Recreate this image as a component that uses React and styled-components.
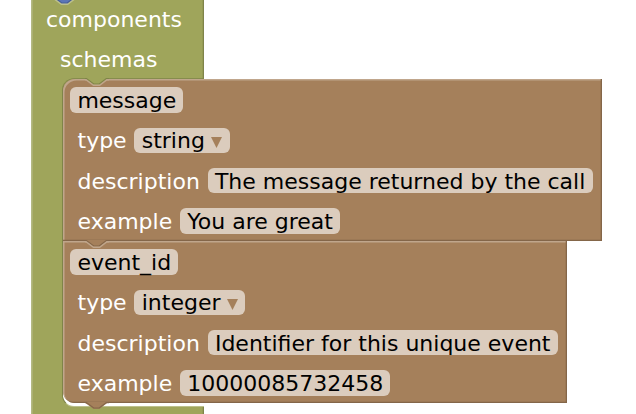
import React from "react";
import styled, { createGlobalStyle } from "styled-components";

const GREEN = "#9fa55b";
const BROWN = "#a5805b";

const GlobalStyle = createGlobalStyle`
  html, body { margin: 0; background: #fff; }
  * { box-sizing: border-box; }
`;

const Workspace = styled.main`
  width: 636px;
  height: 414px;
  overflow: hidden;
  background: #fff;
  padding-left: 31px;
  font: 22px/26px "DejaVu Sans", sans-serif;
`;

const ContainerBlock = styled.section`
  position: relative;
  width: 173px;
  height: 414px;
  color: #fff;
  background: ${GREEN};
  box-shadow: inset 1.6px 0 0 #b4b984;
`;

const Header = styled.div`
  height: 79px;
  box-shadow: inset -1.3px 0 0 #7f8449;
`;

const Label = styled.span`
  white-space: pre;
`;

const HeaderRow = styled.div`
  height: 40px;
  display: flex;
  align-items: center;
  padding-left: ${(p) => p.$indent}px;
`;

const StatementSlot = styled.div`
  margin-left: 31px;
  height: 328px;
  width: 142px;
  background: linear-gradient(${GREEN} 50%, #fff 50%);
  border-left: 1px solid #7f8449;
  border-bottom: 1px solid #bcc08c;
  border-radius: 12px 0 0 12px;
  box-shadow: 0 -0.8px 0 #7f8449;
`;

const Footer = styled.div`
  height: 7px;
  box-shadow: inset -1.3px 0 0 #7f8449;
`;

const PropertyBlock = styled.section`
  position: relative;
  width: ${(p) => p.$width}px;
  height: ${(p) => p.$height}px;
  padding-top: 1px;
  background: ${BROWN};
  border-radius: ${(p) => p.$radius};
  box-shadow:
    inset -1.3px -1.3px 0 #846649,
    inset 1.5px 1.5px 0 #c0a68c;
`;

const PropertyRow = styled.div`
  height: 40.45px;
  display: flex;
  align-items: center;
  gap: 7.7px;
  padding-left: ${(p) => (p.$titled ? 7 : 14.5)}px;

  > ${Label} {
    padding-top: 1.4px;
  }
`;

const Field = styled.span`
  height: 25.5px;
  margin-bottom: 0.8px;
  padding: 2px 7.2px 0 7.4px;
  display: flex;
  align-items: center;
  gap: 6.5px;
  border-radius: 6px;
  background: #dbccbd;
  color: #000;
  white-space: pre;
`;

const Arrow = styled.svg`
  width: 11px;
  height: 11px;
  margin-top: 2px;
`;

const Connector = styled.svg`
  position: absolute;
  left: ${(p) => p.$left}px;
  top: ${(p) => p.$top}px;
  width: 26px;
  height: 9px;
  z-index: 1;
`;

function Notch({ left, top, fill, light, dark, outgoing = false }) {
  return (
    <Connector $left={left} $top={top} viewBox="0 0 26 9">
      <path
        d={outgoing ? "M1 0H24L22.5 1.5L15.5 7H9.5L2 1.5Z" : "M1 0H24V1.5H22.5L15.5 7H9.5L2 2H1Z"}
        fill={fill}
      />
      <path d="M1 .6 H2.4 L9.7 6 H15.2 L22.3 .6 H25" fill="none" stroke={dark} strokeWidth="1.2" />
      {!outgoing && (
        <path d="M1 1.8 H2 L9.4 7.2 H15.7 L23 1.8 H25" fill="none" stroke={light} strokeWidth="1.4" />
      )}
    </Connector>
  );
}

function Select({ children }) {
  return (
    <Field>
      {children}
      <Arrow viewBox="0 0 11 11"><path d="M0 0H11L5.5 11Z" fill={BROWN} /></Arrow>
    </Field>
  );
}

function Property({ name, type, description, example, first, ...shape }) {
  return (
    <PropertyBlock {...shape}>
      <Notch
        left={21}
        top={-1}
        fill={first ? GREEN : BROWN}
        dark={first ? "#7f8449" : "#846649"}
        light="#c0a68c"
      />
      <PropertyRow $titled><Field>{name}</Field></PropertyRow>
      <PropertyRow><Label>type</Label><Select>{type}</Select></PropertyRow>
      <PropertyRow><Label>description</Label><Field>{description}</Field></PropertyRow>
      <PropertyRow><Label>example</Label><Field>{example}</Field></PropertyRow>
      {!first && <Notch left={21} top={160.8} fill={BROWN} dark="#846649" outgoing />}
    </PropertyBlock>
  );
}

export default function App() {
  return (
    <>
      <GlobalStyle />
      <Workspace>
        <ContainerBlock>
          <Notch left={21} top={-3} fill="#5b76b8" dark="#495e93" light="#bcc08c" />
          <Header>
            <HeaderRow $indent={15}><Label>components</Label></HeaderRow>
            <HeaderRow $indent={29}><Label>schemas</Label></HeaderRow>
          </Header>
          <StatementSlot>
            <Property
              first
              $width={538.7}
              $height={162}
              $radius="12px 0 0 0"
              name="message"
              type="string"
              description="The message returned by the call"
              example="You are great"
            />
            <Property
              $width={503.7}
              $height={162}
              $radius="0 0 0 12px"
              name="event_id"
              type="integer"
              description="Identifier for this unique event"
              example="10000085732458"
            />
          </StatementSlot>
          <Footer />
        </ContainerBlock>
      </Workspace>
    </>
  );
}
